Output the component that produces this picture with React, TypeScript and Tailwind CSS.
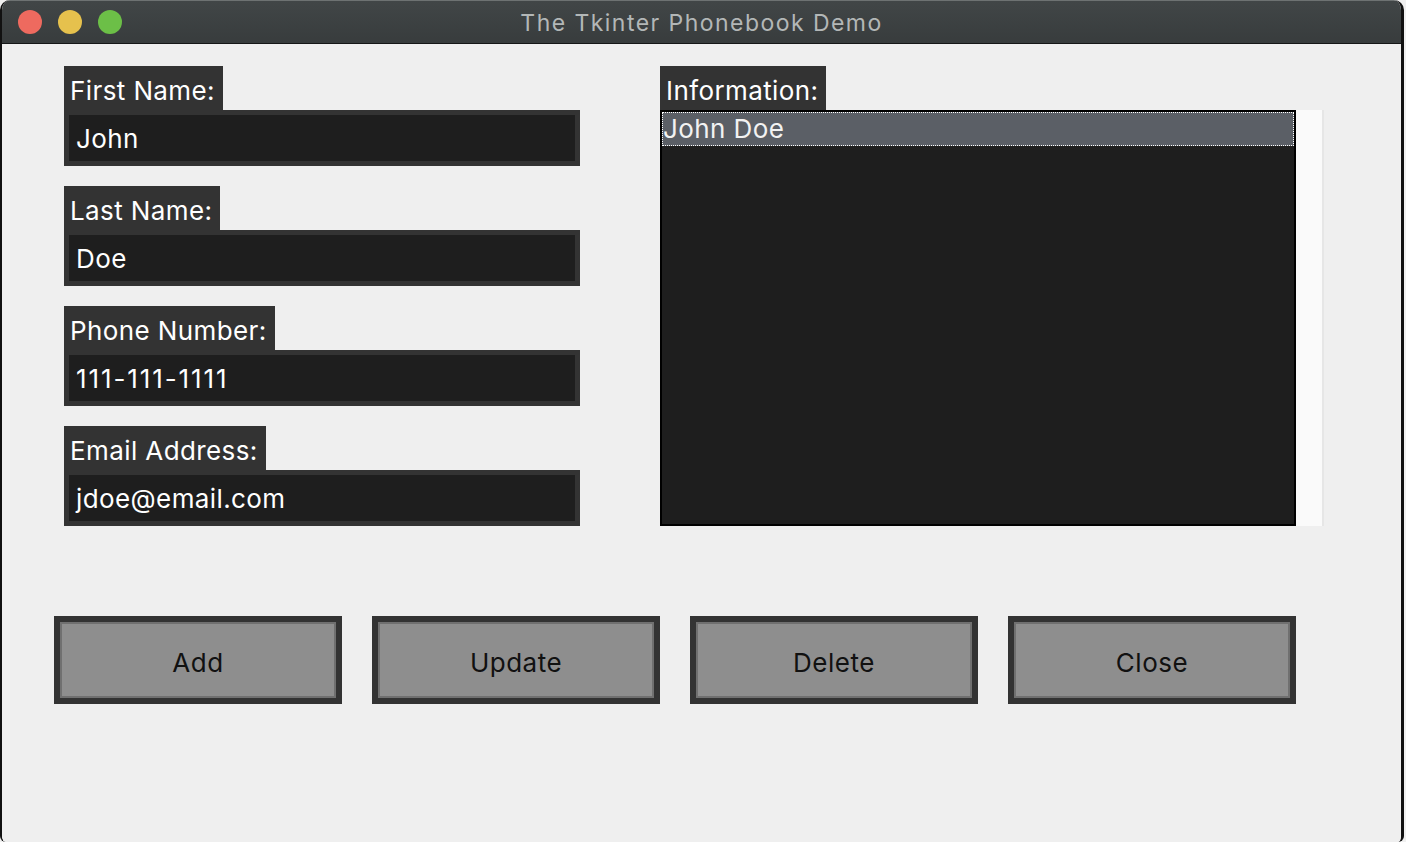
import React from 'react'

const fields = [
  { label: 'First Name:', value: 'John', spaced: false },
  { label: 'Last Name:', value: 'Doe', spaced: false },
  { label: 'Phone Number:', value: '111-111-1111', spaced: true },
  { label: 'Email Address:', value: 'jdoe@email.com', spaced: false },
]

const buttons = ['Add', 'Update', 'Delete', 'Close']

function Field({ label, value, spaced }: { label: string; value: string; spaced: boolean }) {
  return (
    <div className="mb-[20px] flex flex-col items-start">
      <div className="h-[44px] bg-[#333333] pl-[6px] pr-[8px] pt-[7px] text-[26px] leading-[36px] tracking-[0.4px] text-white">
        {label}
      </div>
      <div
        className={
          'h-[56px] w-[516px] border-[5px] border-[#333333] bg-[#1e1e1e] pl-[7px] pt-[1px] text-[26px] leading-[46px] text-white ' +
          (spaced ? 'tracking-[1.9px]' : 'tracking-[0.4px]')
        }
      >
        {value}
      </div>
    </div>
  )
}

export default function App() {
  return (
    <div
      className="h-[842px] w-[1406px] overflow-hidden bg-[#f0f0f0]"
      style={{ fontFamily: 'Inter, "Noto Sans", sans-serif' }}
    >
      <div className="flex h-full w-[1404px] flex-col overflow-hidden rounded-t-[10px] rounded-b-[6px] border-l-[2px] border-r-[3px] border-[#111111]">
        {/* title bar */}
        <div className="relative flex h-[44px] shrink-0 items-center justify-center border-b border-[#151717] border-t border-t-[#6d7272] bg-gradient-to-b from-[#414647] to-[#383c3d]">
          <div className="absolute left-[16px] top-[9px] flex gap-[16px]">
            <span className="h-[24px] w-[24px] rounded-full bg-[#ee6a5f]" />
            <span className="h-[24px] w-[24px] rounded-full bg-[#e6c14d]" />
            <span className="h-[24px] w-[24px] rounded-full bg-[#6cbf47]" />
          </div>
          <span className="pt-[2px] text-[23px] tracking-[1.45px] text-[#b3b7b7]">
            The Tkinter Phonebook Demo
          </span>
        </div>

        {/* content */}
        <div className="flex flex-1 flex-col bg-[#efefef]">
          <div className="flex pl-[62px] pt-[22px]">
            <div className="flex w-[516px] flex-col">
              {fields.map((f) => (
                <Field key={f.label} label={f.label} value={f.value} spaced={f.spaced} />
              ))}
            </div>

            <div className="ml-[80px] flex flex-col items-start">
              <div className="h-[44px] bg-[#333333] pl-[6px] pr-[8px] pt-[7px] text-[26px] leading-[36px] tracking-[0.4px] text-white">
                Information:
              </div>
              <div className="flex">
                <div className="h-[416px] w-[636px] border-2 border-black bg-[#1e1e1e]">
                  <div className="h-[34px] border border-dotted border-white bg-[#5b5f66] text-[26px] leading-[32px] tracking-[0.4px] text-[#f2f2f2]">
                    John Doe
                  </div>
                </div>
                <div className="h-[416px] w-[28px] border-r-2 border-[#e6e6e6] bg-[#fafafa]" />
              </div>
            </div>
          </div>

          <div className="mt-[70px] flex gap-[30px] pl-[52px]">
            {buttons.map((b) => (
              <div
                key={b}
                className="h-[88px] w-[288px] border-[6px] border-[#333333]"
              >
                <div className="flex h-full w-full items-center justify-center border-2 border-[#707070] bg-[#8e8e8e] pt-[5px] text-[26px] tracking-[0.5px] text-[#111111]">
                  {b}
                </div>
              </div>
            ))}
          </div>
        </div>
      </div>
    </div>
  )
}
